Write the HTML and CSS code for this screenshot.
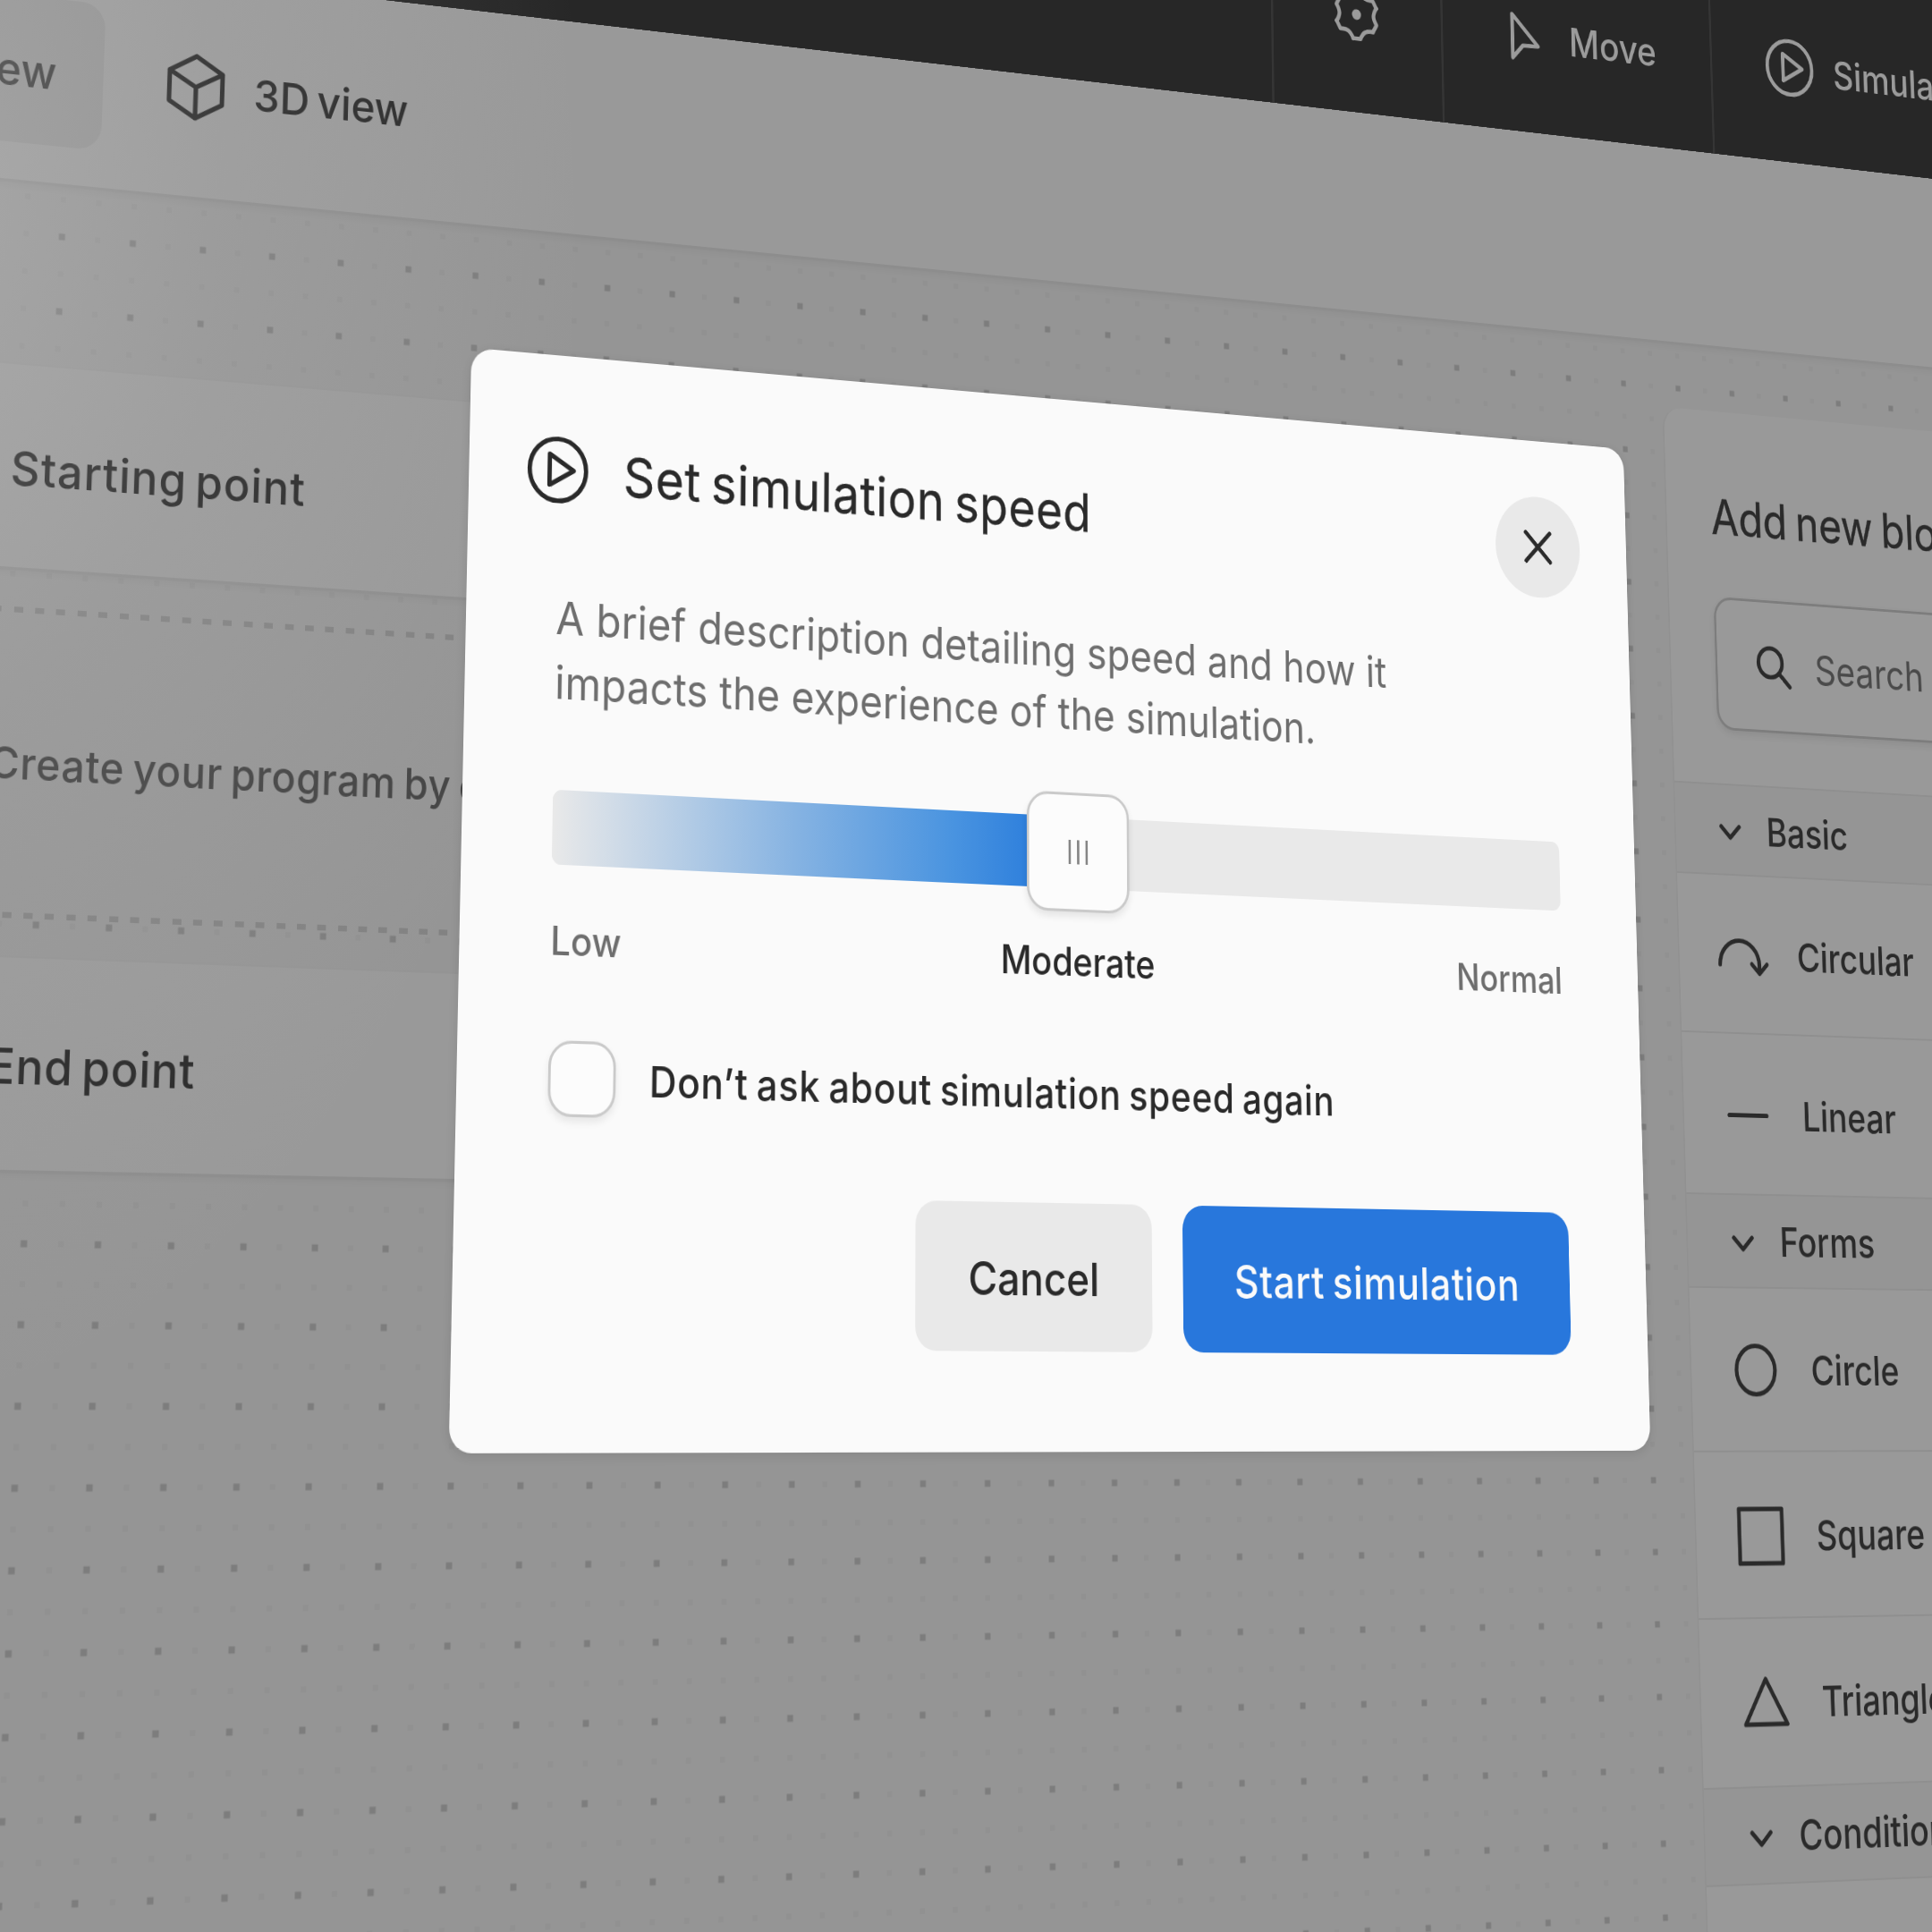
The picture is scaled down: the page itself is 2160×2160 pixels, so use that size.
FILE: index.html
```html
<!DOCTYPE html>
<html lang="en">
<head>
<meta charset="utf-8">
<title>Simulation editor</title>
<link rel="stylesheet" href="styles.css">
</head>
<body>
<svg class="defs" width="0" height="0" aria-hidden="true">
  <symbol id="icon-play" viewBox="0 0 80 80">
    <circle cx="39.500" cy="39.500" r="34"/>
    <path d="M29.500 22.500 L58.500 39.500 L29.500 56.500 Z"/>
  </symbol>
  <symbol id="icon-chevron" viewBox="0 0 54 54">
    <path d="M14 24 L27 37 L40 24"/>
  </symbol>
</svg>
<div class="screen">
  <div class="plane">

    <header class="toolbar">
      <div class="tool tool-settings">
        <svg class="icon" viewBox="-40 -40 80 80">
          <g id="tooth"><path d="M-5.2 29.5 L5.2 29.5 C7 25.5 8.5 22.8 12 20.8 C15.5 18.8 18.6 18.8 23 19.3"/></g>
          <use href="#tooth" transform="rotate(60)"/>
          <use href="#tooth" transform="rotate(120)"/>
          <use href="#tooth" transform="rotate(180)"/>
          <use href="#tooth" transform="rotate(240)"/>
          <use href="#tooth" transform="rotate(300)"/>
          <circle class="solid" r="6.5"/>
        </svg>
      </div>
      <div class="tool tool-move">
        <svg class="icon" viewBox="0 0 80 80"><path d="M23.500 15 L60.500 52 L38.500 53 L23.500 69 Z"/></svg>
        <span>Move</span>
      </div>
      <div class="tool tool-simulate">
        <svg class="icon"><use href="#icon-play"/></svg>
        <span>Simulate</span>
      </div>
    </header>

    <nav class="tabs">
      <div class="tab tab-active">
        <svg class="icon" viewBox="0 0 80 80"><rect x="10" y="10" width="60" height="60"/></svg>
        <span>2D view</span>
      </div>
      <div class="tab">
        <svg class="icon" viewBox="0 0 80 80"><path d="M40 6 L70.5 23.5 V57 L40 74 L9.5 57 V23.5 Z M9.5 23.5 L40 40 L70.5 23.5 M40 40 V74"/></svg>
        <span>3D view</span>
      </div>
    </nav>

    <main class="canvas">
      <section class="flow">
        <div class="card">Starting point</div>
        <div class="dropzone">Create your program by dragging blocks</div>
        <div class="card card-end">End point</div>
      </section>

      <aside class="panel">
        <div class="panel-head">
          <h2 class="panel-title">Add new block</h2>
          <div class="search">
            <svg class="icon-search" viewBox="0 0 64 64"><circle cx="26" cy="27.500" r="17.5"/><path d="M38.500 40 L54 55.500"/></svg>
            <span>Search</span>
          </div>
        </div>
        <div class="group"><svg class="icon-chevron"><use href="#icon-chevron"/></svg><span>Basic</span></div>
        <div class="block">
          <svg class="icon" viewBox="0 0 80 80"><path d="M6.500 53 A28.500 28.500 0 0 1 63.500 53 V62 M52.500 51.500 L63.500 62.500 L74.500 51.500"/></svg>
          <span>Circular</span>
        </div>
        <div class="block">
          <svg class="icon" viewBox="0 0 80 80"><path d="M13 41.500 H67"/></svg>
          <span>Linear</span>
        </div>
        <div class="group"><svg class="icon-chevron"><use href="#icon-chevron"/></svg><span>Forms</span></div>
        <div class="block">
          <svg class="icon" viewBox="0 0 80 80"><circle cx="39.500" cy="41" r="27.500"/></svg>
          <span>Circle</span>
        </div>
        <div class="block">
          <svg class="icon" viewBox="0 0 80 80"><rect x="9" y="11" width="61" height="61"/></svg>
          <span>Square</span>
        </div>
        <div class="block">
          <svg class="icon" viewBox="0 0 80 80"><path d="M39.500 15 L69 65 H10 Z"/></svg>
          <span>Triangle</span>
        </div>
        <div class="group"><svg class="icon-chevron"><use href="#icon-chevron"/></svg><span>Conditions</span></div>
        <div class="block"></div>
      </aside>
    </main>

    <div class="glow"></div>

    <section class="modal" role="dialog">
      <header class="modal-head">
        <svg class="icon"><use href="#icon-play"/></svg>
        <h1 class="modal-title">Set simulation speed</h1>
        <button class="close" aria-label="Close">
          <svg class="icon-close" viewBox="0 0 48 48"><path d="M7 7 L41 41 M41 7 L7 41"/></svg>
        </button>
      </header>
      <div class="modal-body">
        <p class="description">A brief description detailing speed and how it<br>impacts the experience of the simulation.</p>
        <div class="slider">
          <div class="slider-fill"></div>
          <div class="thumb"><i></i><i></i><i></i></div>
        </div>
        <div class="marks">
          <span>Low</span>
          <span class="mark-current">Moderate</span>
          <span class="mark-end">Normal</span>
        </div>
        <label class="remember">
          <span class="checkbox"></span>
          <span>Don’t ask about simulation speed again</span>
        </label>
        <div class="actions">
          <button class="btn btn-cancel">Cancel</button>
          <button class="btn btn-start">Start simulation</button>
        </div>
      </div>
    </section>

  </div>
</div>
</body>
</html>
```
FILE: styles.css
```css
* { box-sizing: border-box; }

body {
  margin: 0;
  background: #959595;
  font-family: Inter, "Liberation Sans", sans-serif;
  font-weight: 500;
  color: #2a2a2a;
}

h1, h2, p { margin: 0; }
button { border: 0; font: inherit; color: inherit; }
svg { flex: none; fill: none; stroke: currentColor; stroke-width: 5.200; stroke-linecap: round; stroke-linejoin: round; }
.defs { position: absolute; }
.icon { width: 80px; height: 80px; }
.solid { fill: currentColor; stroke: none; }

.screen { width: 2160px; height: 2160px; overflow: hidden; }

/* The whole interface lies on one tilted plane. */
.plane {
  position: relative;
  display: flex;
  flex-direction: column;
  width: 3200px;
  height: 2480px;
  transform-origin: 0 0;
  transform: matrix3d(1.00048, 0.11203, 0, 0.000070288, -0.042, 1.02828, 0, -0.000038875, 0, 0, 1, 0, -468.415, -350.023, 0, 0.981515);
}

/* Toolbar */
.toolbar {
  display: flex;
  flex: none;
  height: 240px;
  padding-left: 2067px;
  background: #272727;
  color: #9b9b9b;
  font-size: 49px;
}
.tool {
  display: flex;
  align-items: center;
  gap: 26px;
  border-left: 3px solid #353535;
  padding-left: 77px;
}
.tool span { padding-top: 2px; }
.tool-settings { width: 240px; }
.tool-move { width: 396px; }
.tool-simulate { flex: 1; padding-left: 78px; }

/* View tabs */
.tabs {
  position: relative;
  z-index: 1;
  display: flex;
  flex: none;
  align-items: center;
  gap: 13px;
  height: 240px;
  padding-left: 207px;
  background: #999;
  box-shadow: 0 3px 0 #8d8d8d, 0 4px 9px rgba(0, 0, 0, .06);
  font-size: 48.500px;
  word-spacing: -4px;
  white-space: nowrap;
}
.tab {
  display: flex;
  align-items: center;
  gap: 27px;
  height: 160px;
  padding: 0 53px;
  border-radius: 27px;
}
.tab span { padding-top: 3px; }
.tab-active { justify-content: flex-end; width: 393px; background: #919191; color: #3a3a3a; }

/* Canvas */
.canvas {
  display: flex;
  flex: 1;
  justify-content: space-between;
  background-color: #959595;
  background-image:
    conic-gradient(from 270deg at 7px 7px, #7d7d7d 90deg, transparent 0),
    conic-gradient(from 270deg at 6px 6px, #919191 90deg, transparent 0);
  background-size: 80px 80px, 40px 40px;
  background-position: -3.500px 53.500px, -3px 14px;
}
.flow {
  display: flex;
  flex-direction: column;
  gap: 40.500px;
  width: 1100px;
  margin-left: 272px;
  padding-top: 197px;
}
.card {
  display: flex;
  align-items: center;
  height: 213px;
  padding: 4px 0 0 241px;
  background: #999;
  box-shadow: 0 3px 0 #8d8d8d, 0 4px 8px rgba(0, 0, 0, .05);
  font-size: 50px;
  letter-spacing: 1.1px;
  word-spacing: -5px;
}
.card-end { letter-spacing: .8px; }
.dropzone {
  display: flex;
  align-items: center;
  height: 320px;
  padding: 3px 0 0 230px;
  background:
    repeating-linear-gradient(90deg, #828282 0 10px, transparent 10px 23.37px) 16.9px 0 / 100% 6px no-repeat,
    repeating-linear-gradient(90deg, #828282 0 10px, transparent 10px 23.37px) 16.9px 100% / 100% 6px no-repeat,
    #959595;
  color: #444;
  font-size: 45.500px;
  letter-spacing: .7px;
  word-spacing: -3.500px;
  white-space: nowrap;
}

/* Block library */
.panel {
  width: 584px;
  margin-top: 81px;
  border-left: 2px solid #919191;
  border-radius: 26px 0 0 0;
  background: #999;
}
.panel-head { height: 450px; padding: 94px 65px 0; }
.panel-title { font-size: 59px; font-weight: 400; line-height: 70px; word-spacing: -4px; white-space: nowrap; -webkit-text-stroke: .4px currentColor; }
.search {
  display: flex;
  align-items: center;
  gap: 28px;
  height: 160px;
  margin-top: 62px;
  padding-left: 52px;
  border: 3px solid #7d7d7d;
  border-radius: 25px;
  box-shadow: 0 4px 8px rgba(0, 0, 0, .08);
  color: #4a4a4a;
  font-size: 49.500px;
  font-weight: 400;
}
.icon-search { width: 64px; height: 64px; color: #2a2a2a; }
.group, .block {
  display: flex;
  align-items: center;
  border-top: 2.67px solid #8f8f8f;
  font-size: 46.500px;
}
.group span, .block span { padding-top: 2px; }
.group { gap: 26px; height: 106.67px; padding-left: 52px; background: #959595; }
.block { gap: 39px; height: 186.67px; padding-left: 52px; }
.icon-chevron { width: 54px; height: 54px; stroke-width: 5.300; }

/* Soft light falling from the left edge */
.glow {
  position: absolute;
  z-index: 2;
  inset: 0;
  background: radial-gradient(ellipse 800px 1250px at 380px 520px, rgba(214, 214, 214, .28), rgba(214, 214, 214, .1) 45%, rgba(214, 214, 214, 0));
}

/* Dialog */
.modal {
  position: absolute;
  z-index: 3;
  left: 1037px;
  top: 617px;
  width: 1520px;
  height: 1167px;
  border-radius: 26px;
  background: #fafafa;
  box-shadow: 0 3px 12px rgba(0, 0, 0, .1);
}
.modal-head {
  display: flex;
  align-items: center;
  height: 187px;
  padding: 67px 67px 0;
}
.modal-title {
  flex: 1;
  padding: 2px 0 0 39px;
  font-size: 60px;
  font-weight: 400;
  letter-spacing: .7px;
  word-spacing: -5px;
  -webkit-text-stroke: .3px currentColor;
}
.close {
  display: flex;
  align-items: center;
  justify-content: center;
  width: 120px;
  height: 120px;
  padding: 0;
  border-radius: 50%;
  background: #e9e9e9;
}
.icon-close { width: 48px; height: 48px; }
.modal-body { padding: 66px 107px 0; }
.description {
  color: #6e6e6e;
  font-size: 49.5px;
  font-weight: 400;
  letter-spacing: .2px;
  line-height: 70px;
  white-space: nowrap;
}
.slider {
  position: relative;
  display: flex;
  align-items: center;
  justify-content: center;
  height: 80px;
  margin-top: 80.500px;
  border-radius: 11px;
  background: #e9e9e9;
}
.slider-fill {
  position: absolute;
  inset: 0 50% 0 0;
  border-radius: 11px 0 0 11px;
  background: linear-gradient(90deg, #e9e9e9, #86b3e2 45%, #4a94e0 75%, #2c7edc 92%);
}
.thumb {
  position: relative;
  display: flex;
  flex: none;
  align-items: center;
  justify-content: center;
  gap: 8px;
  width: 133px;
  height: 133px;
  border: 3.500px solid #cacaca;
  border-radius: 27px;
  background: #fcfcfc;
  box-shadow: 0 5px 9px rgba(0, 0, 0, .09);
}
.thumb i { width: 3px; height: 27px; background: #868686; }
.marks {
  display: grid;
  grid-template-columns: 1fr auto 1fr;
  margin-top: 56.500px;
  color: #6e6e6e;
  font-size: 42.5px;
  font-weight: 450;
  line-height: 50px;
}
.mark-current { color: #2a2a2a; font-size: 43.500px; font-weight: 500; }
.mark-end { text-align: right; }
.remember {
  display: flex;
  align-items: center;
  gap: 40px;
  margin-top: 80px;
  font-size: 45.500px;
  letter-spacing: .85px;
  word-spacing: -3px;
}
.checkbox {
  width: 80px;
  height: 80px;
  border: 3.500px solid #cacaca;
  border-radius: 27px;
  background: #fcfcfc;
  box-shadow: 0 5px 9px rgba(0, 0, 0, .08);
}
.actions {
  display: flex;
  justify-content: flex-end;
  gap: 40px;
  margin-top: 80px;
}
.btn {
  height: 160px;
  padding: 3px 0 0;
  border-radius: 26px;
  font-size: 50px;
}
.btn-cancel { width: 300px; padding-right: 2px; background: #e9e9e9; }
.btn-start { width: 520px; padding-right: 2px; background: #2877dc; color: #fafafa; letter-spacing: .9px; word-spacing: -4px; }
```
